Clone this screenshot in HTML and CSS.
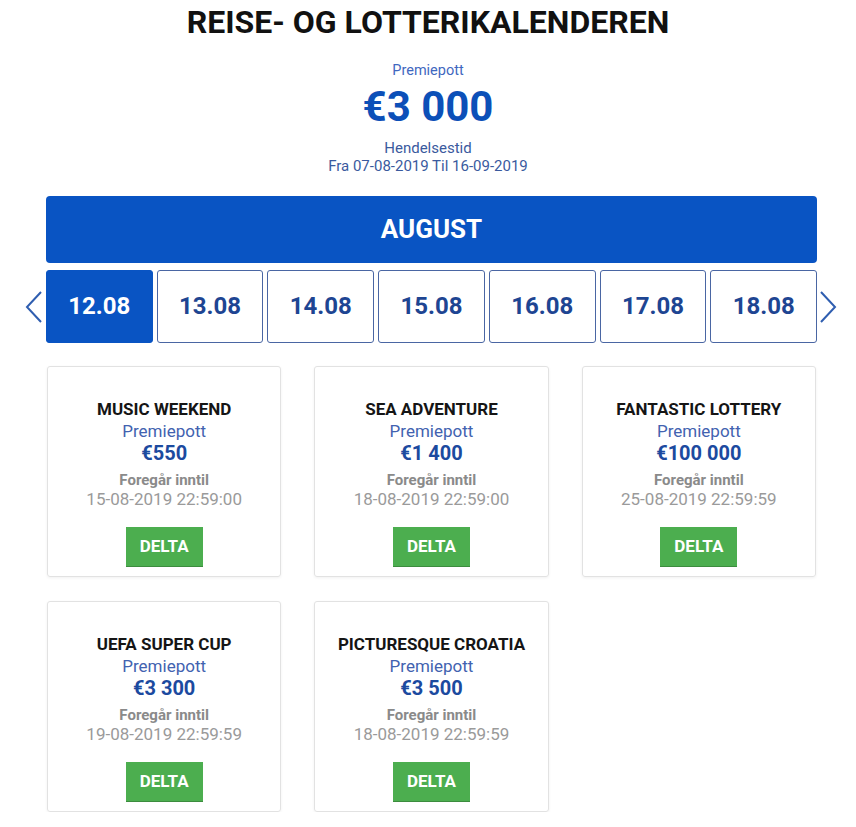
FILE: index.html
```html
<!DOCTYPE html>
<html>
<head>
<meta charset="utf-8">
<link rel="stylesheet" href="styles.css">
</head>
<body>

    <div class="header">
        <h1>REISE- OG LOTTERIKALENDEREN</h1>
        <div class="pot-label">Premiepott</div>
        <div class="pot-value">€3 000</div>
        <div class="period">Hendelsestid<br>Fra 07-08-2019 Til 16-09-2019</div>
    </div>

    <div class="month">AUGUST</div>

    <div class="day-row">
        <div class="arrow arrow-left">
            <svg width="18" height="32" viewBox="0 0 18 32"><path d="M16 1 L2 16 L16 31" fill="none" stroke="#2f5eb0" stroke-width="2"/></svg>
        </div>
        <div class="days">
            <div class="day active">12.08</div>
            <div class="day">13.08</div>
            <div class="day">14.08</div>
            <div class="day">15.08</div>
            <div class="day">16.08</div>
            <div class="day">17.08</div>
            <div class="day">18.08</div>
        </div>
        <div class="arrow arrow-right">
            <svg width="18" height="32" viewBox="0 0 18 32"><path d="M2 1 L16 16 L2 31" fill="none" stroke="#2f5eb0" stroke-width="2"/></svg>
        </div>
    </div>

    <div class="cards">
        <div class="card">
            <div class="card-title">MUSIC WEEKEND</div>
            <div class="card-label">Premiepott</div>
            <div class="card-value">€550</div>
            <div class="card-until">Foregår inntil</div>
            <div class="card-date">15-08-2019 22:59:00</div>
            <div class="btn">DELTA</div>
        </div>
        <div class="card">
            <div class="card-title">SEA ADVENTURE</div>
            <div class="card-label">Premiepott</div>
            <div class="card-value">€1 400</div>
            <div class="card-until">Foregår inntil</div>
            <div class="card-date">18-08-2019 22:59:00</div>
            <div class="btn">DELTA</div>
        </div>
        <div class="card">
            <div class="card-title">FANTASTIC LOTTERY</div>
            <div class="card-label">Premiepott</div>
            <div class="card-value">€100 000</div>
            <div class="card-until">Foregår inntil</div>
            <div class="card-date">25-08-2019 22:59:59</div>
            <div class="btn">DELTA</div>
        </div>
        <div class="card">
            <div class="card-title">UEFA SUPER CUP</div>
            <div class="card-label">Premiepott</div>
            <div class="card-value">€3 300</div>
            <div class="card-until">Foregår inntil</div>
            <div class="card-date">19-08-2019 22:59:59</div>
            <div class="btn">DELTA</div>
        </div>
        <div class="card">
            <div class="card-title">PICTURESQUE CROATIA</div>
            <div class="card-label">Premiepott</div>
            <div class="card-value">€3 500</div>
            <div class="card-until">Foregår inntil</div>
            <div class="card-date">18-08-2019 22:59:59</div>
            <div class="btn">DELTA</div>
        </div>
    </div>

</body>
</html>
```

FILE: styles.css
```css
* {
    box-sizing: border-box;
}

body {
    margin: 0;
    background: #fff;
    font-family: Roboto, "Liberation Sans", sans-serif;
}

.header {
    text-align: center;
    padding-top: 3px;
}

h1 {
    margin: 0;
    font-size: 32px;
    line-height: 38px;
    font-weight: 700;
    color: #111;
}

.pot-label {
    margin-top: 22px;
    font-size: 14.5px;
    line-height: 16px;
    color: #3f68c0;
}

.pot-value {
    margin-top: 5px;
    font-size: 42px;
    line-height: 46px;
    font-weight: 700;
    color: #0c50b8;
}

.period {
    margin-top: 9px;
    font-size: 15px;
    line-height: 18px;
    color: #3a5a9e;
}

.month {
    margin: 21px 39px 0 46px;
    height: 67px;
    line-height: 67px;
    border-radius: 4px;
    background: #0954c3;
    color: #fff;
    text-align: center;
    font-size: 26px;
    font-weight: 700;
}

.day-row {
    display: grid;
    grid-template-columns: 46px 1fr 39px;
    margin-top: 7px;
}

.arrow {
    display: flex;
    align-items: center;
}

.arrow-left {
    justify-content: flex-end;
    padding-right: 3px;
}

.arrow-right {
    justify-content: flex-start;
    padding-left: 2px;
}

.days {
    display: flex;
    gap: 4px;
}

.day {
    flex: 1;
    height: 73px;
    line-height: 71px;
    border: 1px solid #4a66a3;
    border-radius: 3px;
    text-align: center;
    font-size: 24px;
    font-weight: 700;
    color: #1e4592;
}

.day.active {
    background: #0954c3;
    border-color: #0954c3;
    color: #fff;
}

.cards {
    display: grid;
    grid-template-columns: repeat(3, 1fr);
    gap: 24px 33px;
    margin: 23px 40px 0 47px;
}

.card {
    height: 211px;
    padding: 31px 8px 0;
    border: 1px solid #e2e2e2;
    border-radius: 3px;
    box-shadow: 0 1px 3px rgba(0, 0, 0, 0.06);
    text-align: center;
}

.card-title {
    font-size: 17px;
    line-height: 22px;
    font-weight: 700;
    color: #151515;
}

.card-label {
    font-size: 17px;
    line-height: 22px;
    color: #4262b0;
}

.card-value {
    font-size: 20px;
    line-height: 22px;
    font-weight: 700;
    color: #1c4a9f;
}

.card-until {
    margin-top: 6px;
    font-size: 15px;
    line-height: 20px;
    font-weight: 700;
    color: #8a8a8a;
}

.card-date {
    font-size: 17px;
    line-height: 18px;
    color: #9a9a9a;
}

.btn {
    display: inline-block;
    margin-top: 19px;
    width: 77px;
    height: 39px;
    line-height: 38px;
    background: #4cae4f;
    box-shadow: 0 1px 0 #3c8c3e;
    color: #fff;
    font-size: 17px;
    font-weight: 700;
}
```
